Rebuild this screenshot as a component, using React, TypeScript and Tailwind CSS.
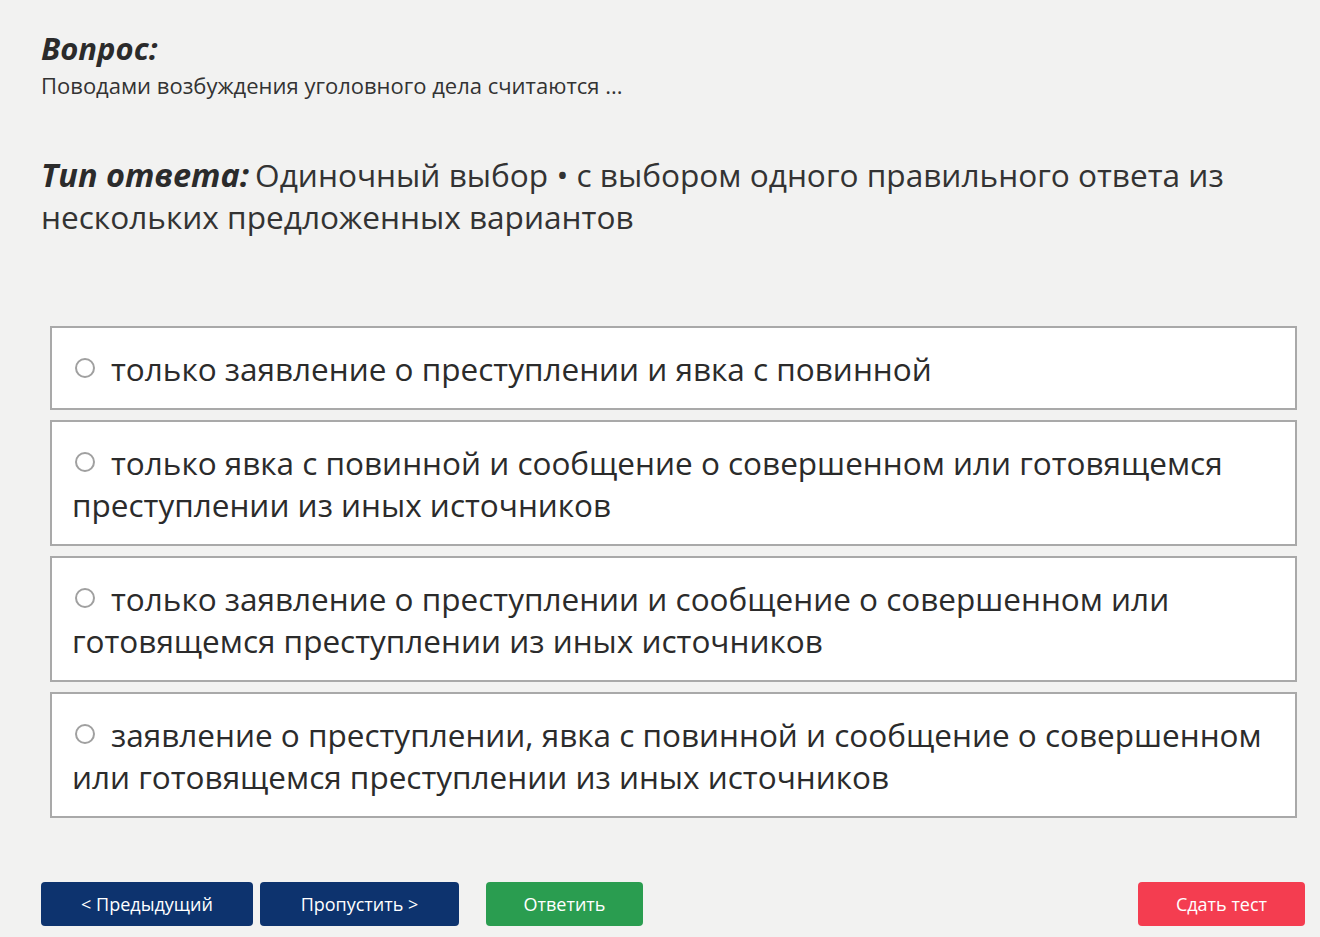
import React from "react";

const options = [
  "только заявление о преступлении и явка с повинной",
  "только явка с повинной и сообщение о совершенном или готовящемся преступлении из иных источников",
  "только заявление о преступлении и сообщение о совершенном или готовящемся преступлении из иных источников",
  "заявление о преступлении, явка с повинной и сообщение о совершенном или готовящемся преступлении из иных источников",
];

export default function App() {
  return (
    <div
      className="w-[1320px] h-[937px] bg-[#f2f2f1] text-[#2b2b2b] overflow-hidden"
      style={{ fontFamily: '"Open Sans", "Noto Sans", sans-serif' }}
    >
      <div className="pl-[41px] pr-[23px] pt-[26px]">
        <div className="text-[31px] leading-[44px] font-bold italic text-[#2b2b2b]">Вопрос:</div>
        <div className="text-[22px] leading-[30px] text-[#333]">
          Поводами возбуждения уголовного дела считаются ...
        </div>
        <div className="mt-[54px] text-[31.6px] leading-[42px] text-[#333] pr-[60px]">
          <span className="font-bold italic text-[#2b2b2b] text-[32.5px] mr-[6px]">Тип ответа:</span>Одиночный выбор • с
          выбором одного правильного ответа из нескольких предложенных вариантов
        </div>
      </div>
      <div className="mt-[88px] ml-[50px] w-[1247px] flex flex-col gap-[10px]">
        {options.map((o, i) => (
          <div
            key={i}
            className="bg-white border-2 border-[#a9a9a9] px-[20px] pt-[20px] pb-[18px] text-[31.5px] leading-[42px] text-[#2b2b2b]"
          >
            <span className="inline-block w-[20px] h-[20px] rounded-full border-2 border-[#a0a0a0] ml-[3px] mr-[16px] align-[3px]" />
            {o}
          </div>
        ))}
      </div>
      <div className="mt-[64px] pl-[41px] pr-[15px] flex items-center">
        <button className="w-[212px] h-[44px] rounded-[4px] bg-[#0d336e] text-white text-[18px]">
          &lt; Предыдущий
        </button>
        <button className="ml-[7px] w-[199px] h-[44px] rounded-[4px] bg-[#0d336e] text-white text-[18px]">
          Пропустить &gt;
        </button>
        <button className="ml-[27px] w-[157px] h-[44px] rounded-[4px] bg-[#2a9d50] text-white text-[18px]">
          Ответить
        </button>
        <div className="flex-1" />
        <button className="w-[167px] h-[44px] rounded-[4px] bg-[#f43d50] text-white text-[18px]">
          Сдать тест
        </button>
      </div>
    </div>
  );
}
